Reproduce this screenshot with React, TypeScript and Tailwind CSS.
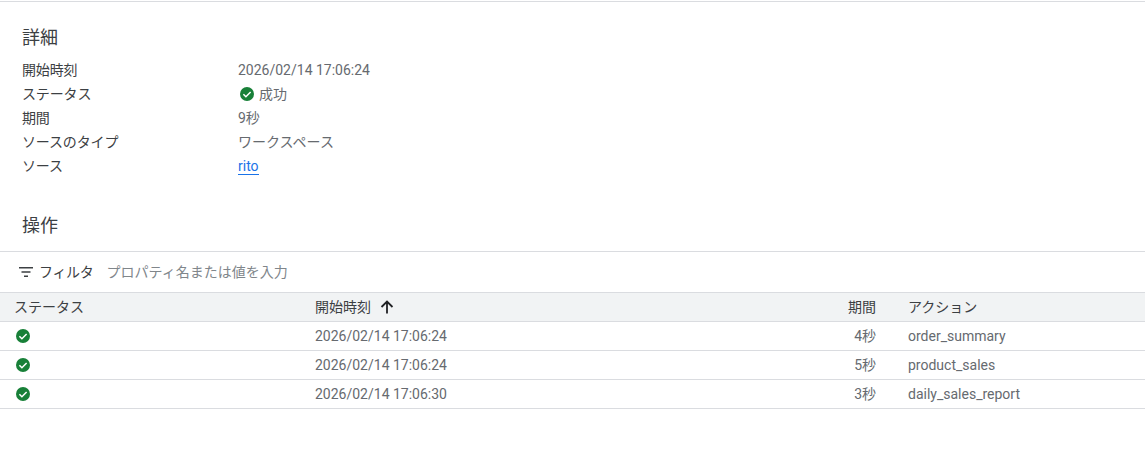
import React from 'react';

const FONT = "font-['Roboto','Noto_Sans_CJK_JP',sans-serif]";

const DETAILS = [
  { label: '開始時刻', value: '2026/02/14 17:06:24' },
  { label: 'ステータス', value: '成功', ok: true },
  { label: '期間', value: '9秒' },
  { label: 'ソースのタイプ', value: 'ワークスペース' },
  { label: 'ソース', value: 'rito', link: true },
];

const ROWS = [
  { start: '2026/02/14 17:06:24', duration: '4秒', action: 'order_summary' },
  { start: '2026/02/14 17:06:24', duration: '5秒', action: 'product_sales' },
  { start: '2026/02/14 17:06:30', duration: '3秒', action: 'daily_sales_report' },
];

function CheckCircle() {
  return (
    <svg width="14" height="14" viewBox="0 0 14 14" className="block shrink-0">
      <circle cx="7" cy="7" r="7" fill="#188038" />
      <path d="M3.4 7.2 L5.9 9.7 L10.6 5" fill="none" stroke="#fff" strokeWidth="1.5" />
    </svg>
  );
}

export default function App() {
  return (
    <div className={`${FONT} h-[456px] w-[1145px] overflow-hidden bg-white text-[14px] text-[#666a6f]`}>
      <div className="mt-px h-px bg-[#dadce0]" />

      <section className="pl-[22px] pt-[24px]">
        <h2 className="h-[24px] text-[18px] leading-[24px] text-[#3c4043]">詳細</h2>
        <dl className="mt-[8px]">
          {DETAILS.map((d) => (
            <div key={d.label} className="flex h-[24px] items-center leading-[24px]">
              <dt className="w-[216px] tracking-[-0.15px] text-[#3c4043]">{d.label}</dt>
              <dd className="flex items-center">
                {d.ok && (
                  <span className="ml-[2px] mr-[5px]">
                    <CheckCircle />
                  </span>
                )}
                {d.link ? (
                  <a className="border-b border-[#1a73e8] leading-[16px] text-[#1a73e8]">{d.value}</a>
                ) : (
                  d.value
                )}
              </dd>
            </div>
          ))}
        </dl>
      </section>

      <h2 className="mt-[36px] h-[24px] pl-[22px] text-[18px] leading-[24px] text-[#3c4043]">操作</h2>

      <div className="mt-[13px] flex h-[42px] items-center border-y border-[#dadce0]">
        <svg width="14" height="10" viewBox="0 0 14 10" className="ml-[19px]">
          <path d="M0 0h14v1.6H0zM2.5 4.2h9v1.6h-9zM5 8.4h4V10H5z" fill="#3c4043" />
        </svg>
        <span className="ml-[6px] tracking-[-0.3px] text-[#3c4043]">フィルタ</span>
        <span className="ml-[13px] text-[#80868b]">プロパティ名または値を入力</span>
      </div>

      <div className="flex h-[29px] items-center border-b border-[#dadce0] bg-[#f1f3f4] text-[#3c4043]">
        <div className="w-[315px] pl-[14px]">ステータス</div>
        <div className="flex w-[481px] items-center">
          開始時刻
          <svg width="14" height="14" viewBox="0 0 14 14" className="ml-[9px]">
            <path d="M7 13.5V1.5M1.5 7L7 1.5 12.5 7" fill="none" stroke="#202124" strokeWidth="1.8" />
          </svg>
        </div>
        <div className="w-[80px] text-right">期間</div>
        <div className="pl-[32px]">アクション</div>
      </div>

      {ROWS.map((r, i) => (
        <div key={i} className="flex h-[29px] items-center border-b border-[#dadce0]">
          <div className="w-[315px] pl-[16px]">
            <CheckCircle />
          </div>
          <div className="w-[481px]">{r.start}</div>
          <div className="w-[80px] text-right">{r.duration}</div>
          <div className="pl-[32px]">{r.action}</div>
        </div>
      ))}
    </div>
  );
}
